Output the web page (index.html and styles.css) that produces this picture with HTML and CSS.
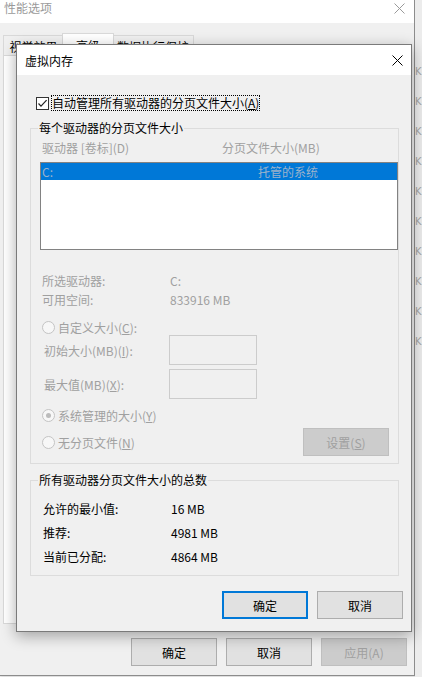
FILE: index.html
```html
<!DOCTYPE html>
<html lang="zh-CN">
<head>
<meta charset="utf-8">
<title>虚拟内存</title>
<link rel="stylesheet" href="styles.css">
</head>
<body>
<div class="desktop">
  <div class="bgwin">
    <div class="bg-title">
      <span class="bg-title-text">性能选项</span>
      <svg class="bg-close" width="11" height="11" viewBox="0 0 11 11"><path d="M0.5 0.5L10.5 10.5M10.5 0.5L0.5 10.5" stroke="#9a9a9a" stroke-width="1" fill="none"/></svg>
    </div>
    <div class="bg-body">
      <div class="tabs">
        <div class="tab t1">视觉效果</div>
        <div class="tab t2 sel">高级</div>
        <div class="tab t3">数据执行保护</div>
      </div>
      <div class="tabpage"></div>
      <div class="bg-buttons">
        <div class="btn">确定</div>
        <div class="btn">取消</div>
        <div class="btn disabled">应用(A)</div>
      </div>
    </div>
  </div>
  <div class="strip">
    <span>K</span><span>K</span><span>K</span><span>K</span><span>K</span>
    <span>K</span><span>K</span><span>K</span><span>K</span><span>K</span>
  </div>

  <div class="dialog">
    <div class="dlg-title">
      <span>虚拟内存</span>
      <svg width="11" height="11" viewBox="0 0 11 11"><path d="M0.5 0.5L10.5 10.5M10.5 0.5L0.5 10.5" stroke="#000" stroke-width="1" fill="none"/></svg>
    </div>
    <div class="dlg-body">
      <div class="auto-row">
        <span class="checkbox"><svg width="11" height="11" viewBox="0 0 11 11"><path d="M1.5 5.5L4 8.2L9.6 2.2" stroke="#222" stroke-width="1.2" fill="none"/></svg></span>
        <span class="focus-label">自动管理所有驱动器的分页文件大小(<u>A</u>)</span>
      </div>

      <div class="group group1">
        <span class="legend">每个驱动器的分页文件大小</span>
        <div class="hdr"><span class="hcol1">驱动器 [卷标](D)</span><span>分页文件大小(MB)</span></div>
        <div class="list">
          <div class="list-row"><span class="lcol1">C:</span><span>托管的系统</span></div>
        </div>
        <div class="info">
          <div class="info-row"><span class="ilabel">所选驱动器:</span><span>C:</span></div>
          <div class="info-row"><span class="ilabel">可用空间:</span><span>833916 MB</span></div>
        </div>
        <div class="radio-row r-custom"><span class="radio"></span><span class="rlabel">自定义大小(<u>C</u>):</span></div>
        <div class="field-row"><span class="flabel">初始大小(MB)(<u>I</u>):</span><span class="tbox"></span></div>
        <div class="field-row f2"><span class="flabel">最大值(MB)(<u>X</u>):</span><span class="tbox"></span></div>
        <div class="radio-row r-sys"><span class="radio checked"><span class="dot"></span></span><span class="rlabel">系统管理的大小(<u>Y</u>)</span></div>
        <div class="last-row">
          <div class="radio-row"><span class="radio"></span><span class="rlabel">无分页文件(<u>N</u>)</span></div>
          <div class="btn disabled set">设置(<u>S</u>)</div>
        </div>
      </div>

      <div class="group group2">
        <span class="legend">所有驱动器分页文件大小的总数</span>
        <div class="total-row"><span class="tlabel">允许的最小值:</span><span>16 MB</span></div>
        <div class="total-row"><span class="tlabel">推荐:</span><span>4981 MB</span></div>
        <div class="total-row"><span class="tlabel">当前已分配:</span><span>4864 MB</span></div>
      </div>

      <div class="dlg-buttons">
        <div class="btn default">确定</div>
        <div class="btn">取消</div>
      </div>
    </div>
  </div>
</div>
</body>
</html>
```

FILE: styles.css
```css
* { box-sizing: border-box; }

body {
  margin: 0;
  font-family: "Noto Sans CJK SC", "Microsoft YaHei", "Noto Sans", sans-serif;
  font-size: 12px;
  color: #000;
  background: #ececec;
}

u { text-decoration: underline; text-underline-offset: 1px; }

.desktop {
  position: relative;
  width: 422px;
  height: 677px;
  overflow: hidden;
  display: flex;
}

/* background window */
.bgwin {
  flex-shrink: 0;
  width: 415px;
  height: 676px;
  background: #f0f0f0;
  border-right: 1px solid #8c8c8c;
  border-bottom: 1px solid #8c8c8c;
  display: flex;
  flex-direction: column;
  box-shadow: 1px 0 3px rgba(0,0,0,0.15);
}

.bg-title {
  height: 23px;
  background: #fff;
  display: flex;
  justify-content: space-between;
  align-items: flex-start;
  padding: 0 9px 0 4px;
}

.bg-title-text {
  color: #9a9a9a;
  line-height: 16px;
}

.bg-close { margin-top: 3px; }

.bg-body {
  flex: 1;
  display: flex;
  flex-direction: column;
}

.tabs {
  display: flex;
  align-items: flex-end;
  height: 22px;
  margin-top: 10px;
  padding-left: 3px;
}

.tab {
  height: 20px;
  border: 1px solid #d9d9d9;
  border-bottom: none;
  background: #f0f0f0;
  text-align: center;
  line-height: 21px;
  white-space: nowrap;
}

.t1 { width: 61px; }
.t2 { width: 52px; }
.t3 { width: 82px; }

.tab.sel {
  height: 23px;
  margin: 0 -2px -1px;
  background: #fff;
  position: relative;
  z-index: 1;
  line-height: 24px;
}

.tabpage {
  margin-left: 3px;
  width: 404px;
  height: 569px;
  background: #fff;
  border: 1px solid #d9d9d9;
}

.bg-buttons {
  display: flex;
  justify-content: flex-end;
  gap: 9px;
  margin-top: 14px;
  padding-right: 7px;
}

.btn {
  width: 86px;
  height: 28px;
  background: #e1e1e1;
  border: 1px solid #adadad;
  display: flex;
  align-items: center;
  justify-content: center;
  white-space: nowrap;
}

.btn.disabled {
  background: #cccccc;
  border-color: #bfbfbf;
  color: #a0a0a0;
}

.btn.default {
  border: 2px solid #0078d7;
}

.strip {
  flex: 1;
  padding-top: 57px;
  overflow: hidden;
  background: #ececec;
}

.strip span {
  display: block;
  line-height: 30px;
  font-size: 10px;
  font-family: "DejaVu Sans", sans-serif;
  color: #a5a5a5;
  white-space: nowrap;
}

/* dialog */
.dialog {
  position: absolute;
  z-index: 5;
  left: 16px;
  top: 44px;
  width: 396px;
  height: 588px;
  background: #f0f0f0;
  border: 1px solid #7a7a7a;
  box-shadow: 0 4px 14px rgba(0,0,0,0.33);
  display: flex;
  flex-direction: column;
}

.dlg-title {
  height: 30px;
  flex-shrink: 0;
  background: #fff;
  display: flex;
  align-items: center;
  justify-content: space-between;
  padding: 0 8px;
}

.dlg-body {
  padding: 19px 8px 0 13px;
}

.auto-row {
  display: flex;
  align-items: center;
  height: 18px;
  padding-left: 6px;
}

.checkbox {
  width: 13px;
  height: 13px;
  border: 1px solid #333;
  background: #fff;
  display: flex;
  align-items: center;
  justify-content: center;
}

.focus-label {
  margin-left: 2px;
  border: 1px dotted #000;
  line-height: 14px;
}

.group {
  position: relative;
  width: 369px;
  border: 1px solid #dcdcdc;
}

.legend {
  position: absolute;
  top: -9px;
  left: 7px;
  padding: 0 1px;
  line-height: 16px;
  background: #f0f0f0;
  white-space: nowrap;
}

.group1 {
  margin-top: 16px;
  padding: 11px 0 7px 9px;
}

.hdr {
  display: flex;
  line-height: 16px;
  padding-left: 2px;
  color: #a0a0a0;
}

.hcol1 { width: 180px; }

.list {
  margin-top: 6px;
  height: 88px;
  border: 1px solid #828282;
  background: #fff;
}

.list-row {
  display: flex;
  height: 17px;
  line-height: 17px;
  padding-left: 1px;
  background: #0078d7;
  color: #9cb2cb;
}

.lcol1 { width: 216px; }

.info { margin-top: 21px; }

.info-row {
  display: flex;
  line-height: 19px;
  padding-left: 2px;
  color: #a0a0a0;
}

.ilabel { width: 128px; }

.radio-row {
  display: flex;
  align-items: center;
  height: 16px;
  padding-left: 2px;
  color: #a0a0a0;
}

.r-custom { margin-top: 10px; }
.r-sys { margin-top: 8px; }

.radio {
  width: 13px;
  height: 13px;
  border-radius: 50%;
  border: 1px solid #c4c4c4;
  background: #f7f7f7;
  display: flex;
  align-items: center;
  justify-content: center;
}

.dot {
  width: 5px;
  height: 5px;
  border-radius: 50%;
  background: #bcbcbc;
}

.rlabel { margin-left: 3px; }

.field-row {
  display: flex;
  align-items: center;
  height: 30px;
  padding-left: 4px;
  color: #a0a0a0;
}

.field-row.f2 { margin-top: 4px; }

.flabel { width: 125px; }

.tbox {
  width: 88px;
  height: 30px;
  border: 1px solid #cccccc;
  background: #f0f0f0;
}

.last-row {
  display: flex;
  align-items: center;
  justify-content: space-between;
  height: 28px;
  margin-top: 5px;
  padding-right: 9px;
}

.group2 {
  margin-top: 16px;
  padding: 16px 0 6px 12px;
}

.total-row {
  display: flex;
  line-height: 24px;
}

.tlabel { width: 128px; }

.dlg-buttons {
  display: flex;
  justify-content: flex-end;
  gap: 9px;
  margin-top: 15px;
}
```
